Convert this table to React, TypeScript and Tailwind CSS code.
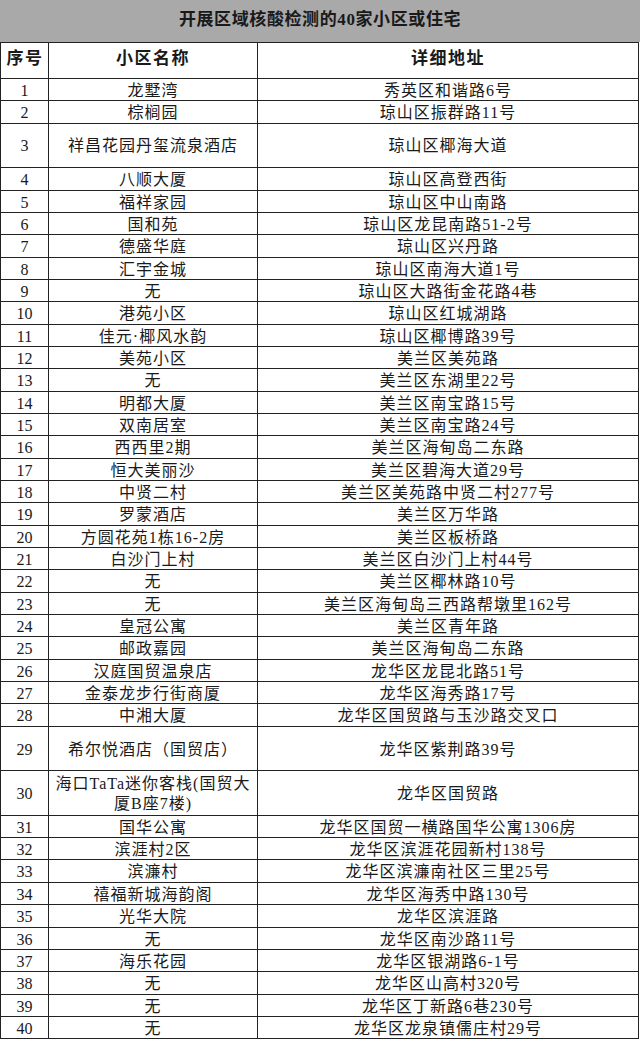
const rows: [string, string, boolean?][] = [
  ["龙墅湾", "秀英区和谐路6号"],
  ["棕榈园", "琼山区振群路11号"],
  ["祥昌花园丹玺流泉酒店", "琼山区椰海大道", true],
  ["八顺大厦", "琼山区高登西街"],
  ["福祥家园", "琼山区中山南路"],
  ["国和苑", "琼山区龙昆南路51-2号"],
  ["德盛华庭", "琼山区兴丹路"],
  ["汇宇金城", "琼山区南海大道1号"],
  ["无", "琼山区大路街金花路4巷"],
  ["港苑小区", "琼山区红城湖路"],
  ["佳元·椰风水韵", "琼山区椰博路39号"],
  ["美苑小区", "美兰区美苑路"],
  ["无", "美兰区东湖里22号"],
  ["明都大厦", "美兰区南宝路15号"],
  ["双南居室", "美兰区南宝路24号"],
  ["西西里2期", "美兰区海甸岛二东路"],
  ["恒大美丽沙", "美兰区碧海大道29号"],
  ["中贤二村", "美兰区美苑路中贤二村277号"],
  ["罗蒙酒店", "美兰区万华路"],
  ["方圆花苑1栋16-2房", "美兰区板桥路"],
  ["白沙门上村", "美兰区白沙门上村44号"],
  ["无", "美兰区椰林路10号"],
  ["无", "美兰区海甸岛三西路帮墩里162号"],
  ["皇冠公寓", "美兰区青年路"],
  ["邮政嘉园", "美兰区海甸岛二东路"],
  ["汉庭国贸温泉店", "龙华区龙昆北路51号"],
  ["金泰龙步行街商厦", "龙华区海秀路17号"],
  ["中湘大厦", "龙华区国贸路与玉沙路交叉口"],
  ["希尔悦酒店（国贸店）", "龙华区紫荆路39号", true],
  ["海口TaTa迷你客栈(国贸大厦B座7楼)", "龙华区国贸路", true],
  ["国华公寓", "龙华区国贸一横路国华公寓1306房"],
  ["滨涯村2区", "龙华区滨涯花园新村138号"],
  ["滨濂村", "龙华区滨濂南社区三里25号"],
  ["禧福新城海韵阁", "龙华区海秀中路130号"],
  ["光华大院", "龙华区滨涯路"],
  ["无", "龙华区南沙路11号"],
  ["海乐花园", "龙华区银湖路6-1号"],
  ["无", "龙华区山高村320号"],
  ["无", "龙华区丁新路6巷230号"],
  ["无", "龙华区龙泉镇儒庄村29号"],
];

export default function App() {
  return (
    <div
      className="w-[640px] h-[1039px] bg-white text-[#1a1a1a] overflow-hidden"
      style={{ fontFamily: '"Liberation Serif", "Noto Sans CJK SC", serif' }}
    >
      <div className="h-[42px] bg-[#a9a9a9] flex items-center justify-center text-[17px] tracking-[0.6px] font-bold pb-[2px]">
        开展区域核酸检测的40家小区或住宅
      </div>
      <div className="w-[639px] border-l-[1.5px] border-r-[1.5px] border-t-[1.5px] border-[#222]">
        <div className="grid grid-cols-[48px_209px_1fr] h-[36px] border-b-[1.5px] border-[#222] text-[17px] tracking-[1.5px] font-bold">
          <div className="border-r-[1.5px] border-[#222] flex justify-center pt-[3px] pl-[1px]">序号</div>
          <div className="border-r-[1.5px] border-[#222] flex justify-center pt-[3px]">小区名称</div>
          <div className="flex justify-center pt-[3px]">详细地址</div>
        </div>
        {rows.map(([name, addr, tall], i) => (
          <div
            key={i}
            className={`grid grid-cols-[48px_209px_1fr] border-b-[1.5px] border-[#222] text-[16px] leading-[20px] ${
              tall ? "h-[44.5px]" : "h-[22.35px]"
            }`}
          >
            <div className="border-r-[1.5px] border-[#222] flex items-center justify-center pt-[2px]">
              {i + 1}
            </div>
            <div className="border-r-[1.5px] border-[#222] flex items-center justify-center text-center tracking-[1px] pt-[2px] px-[3px]">
              {name}
            </div>
            <div className="flex items-center justify-center tracking-[1px] pt-[2px]">{addr}</div>
          </div>
        ))}
      </div>
    </div>
  );
}
